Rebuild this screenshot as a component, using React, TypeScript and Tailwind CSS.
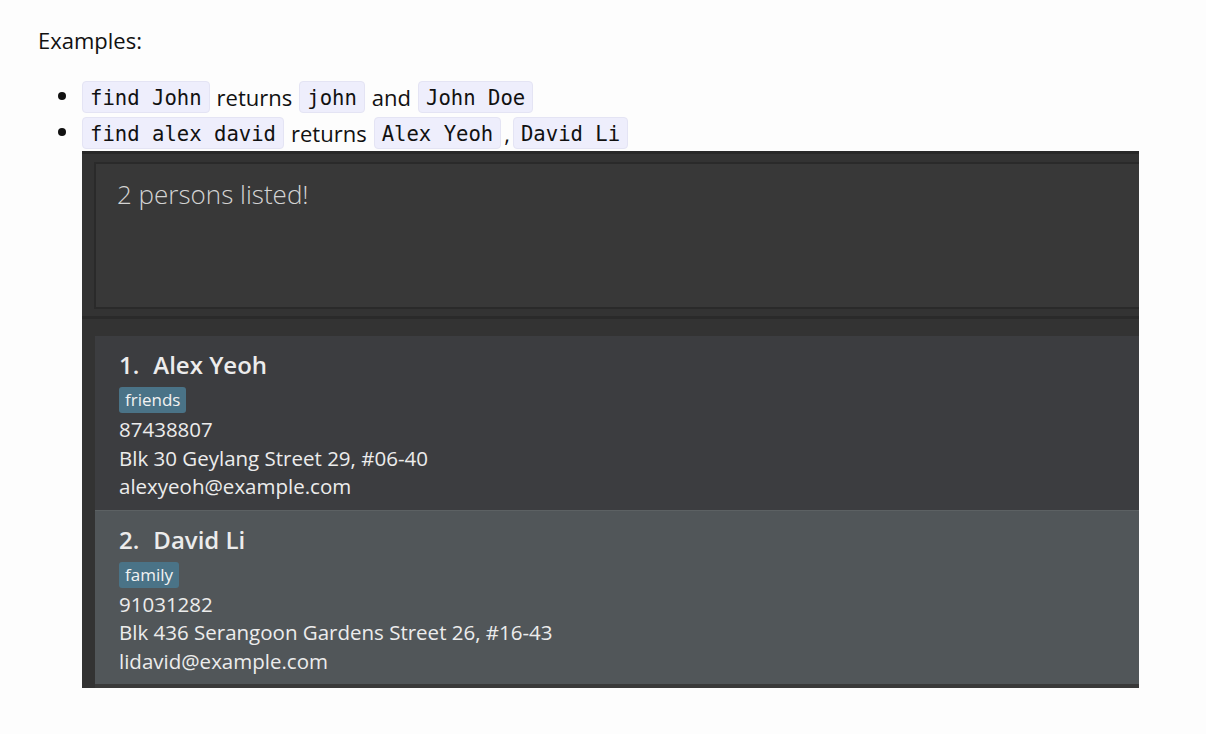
import React from "react";

const sans = { fontFamily: '"Open Sans", "Noto Sans", sans-serif' };
const mono = { fontFamily: '"DejaVu Sans Mono", "Liberation Mono", monospace' };

function Code({ children }: { children: React.ReactNode }) {
  return (
    <span
      className="inline-flex items-center h-[32px] px-[7px] pt-[2px] rounded-[4px] border border-[#e4e4f4] bg-[#eeeefc] text-[20.6px] text-[#111]"
      style={mono}
    >
      {children}
    </span>
  );
}

function Bullet() {
  return <span className="absolute left-[-24px] top-[13px] w-[8px] h-[8px] rounded-full bg-[#111]" />;
}

function Card({
  idx,
  name,
  tag,
  phone,
  address,
  email,
  bg,
}: {
  idx: number;
  name: string;
  tag: string;
  phone: string;
  address: string;
  email: string;
  bg: string;
}) {
  return (
    <div className={`w-[1100px] pl-[24px] pt-[14px] pb-[9px] text-[#ececec] ${bg}`} style={sans}>
      <div className="flex h-[30px] items-center text-[24px] font-semibold leading-[30px]">
        <span>{idx}.</span>
        <span className="ml-[14px]">{name}</span>
      </div>
      <div className="mt-[7px] flex">
        <span className="inline-flex h-[26px] items-center rounded-[3px] bg-[#4a7387] px-[6px] text-[17px] font-medium text-[#f2f2f2]">
          {tag}
        </span>
      </div>
      <div className="mt-[2px] text-[20.5px] leading-[28.5px]">
        <div>{phone}</div>
        <div>{address}</div>
        <div>{email}</div>
      </div>
    </div>
  );
}

export default function App() {
  return (
    <div className="min-h-[734px] w-[1206px] bg-[#fdfdfd] pl-[38px] pt-[25px] text-[#111]" style={sans}>
      <div className="text-[22px] leading-[30px]">Examples:</div>
      <ul className="mt-[24px] pl-[44px] text-[22px]">
        <li className="relative flex h-[36px] items-center gap-[7px]">
          <Bullet />
          <Code>find John</Code>
          <span>returns</span>
          <Code>john</Code>
          <span>and</span>
          <Code>John Doe</Code>
        </li>
        <li className="relative">
          <div className="relative flex h-[36px] items-center gap-[7px]">
            <Bullet />
            <Code>find alex david</Code>
            <span>returns</span>
            <Code>Alex Yeoh</Code>
            <span className="-mx-[4px]">,</span>
            <Code>David Li</Code>
          </div>
          <div className="h-[537px] w-[1057px] overflow-hidden border-t-[3px] border-[#282828] bg-[#333333]">
            <div className="ml-[12px] mt-[8px] h-[147px] w-[1100px] border-2 border-[#2a2a2a] bg-[#383838] pl-[21px] pt-[13px]">
              <div className="text-[26px] font-light leading-[34px] text-[#d4d4d4]" style={sans}>
                2 persons listed!
              </div>
            </div>
            <div className="mt-[7px] h-[3px] w-full bg-[#2a2a2a]" />
            <div className="ml-[13px] mt-[17px] border-b-[4px] border-[#3a3a3a]">
              <Card
                idx={1}
                name="Alex Yeoh"
                tag="friends"
                phone="87438807"
                address="Blk 30 Geylang Street 29, #06-40"
                email="alexyeoh@example.com"
                bg="bg-[#3c3d40]"
              />
              <div className="border-t border-[#5c6163]">
                <Card
                  idx={2}
                  name="David Li"
                  tag="family"
                  phone="91031282"
                  address="Blk 436 Serangoon Gardens Street 26, #16-43"
                  email="lidavid@example.com"
                  bg="bg-[#515659]"
                />
              </div>
            </div>
          </div>
        </li>
      </ul>
    </div>
  );
}
